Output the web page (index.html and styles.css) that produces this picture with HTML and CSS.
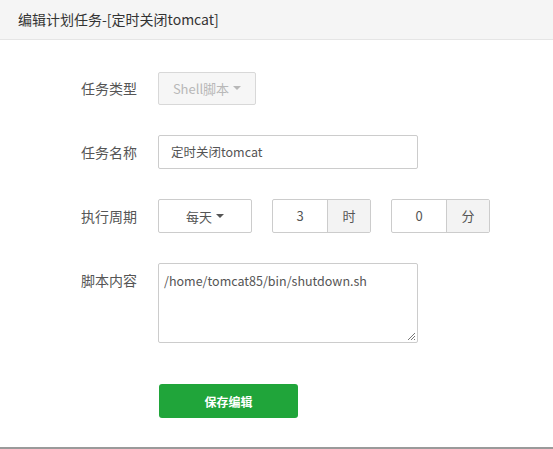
FILE: index.html
```html
<!DOCTYPE html>
<html lang="zh-CN">
<head>
<meta charset="utf-8">
<title>编辑计划任务</title>
<link rel="stylesheet" href="styles.css">
</head>
<body>
<div class="dialog">
  <div class="header">编辑计划任务-[定时关闭tomcat]</div>
  <div class="form">
    <div class="row">
      <span class="label">任务类型</span>
      <div class="select disabled select-type">Shell脚本 <span class="caret"></span></div>
    </div>
    <div class="row">
      <span class="label">任务名称</span>
      <div class="input input-name">定时关闭tomcat</div>
    </div>
    <div class="row">
      <span class="label">执行周期</span>
      <div class="period">
        <div class="select select-cycle">每天 <span class="caret"></span></div>
        <div class="group">
          <div class="group-input">3</div>
          <div class="addon">时</div>
        </div>
        <div class="group">
          <div class="group-input">0</div>
          <div class="addon">分</div>
        </div>
      </div>
    </div>
    <div class="row row-top">
      <span class="label">脚本内容</span>
      <div class="textarea">/home/tomcat85/bin/shutdown.sh
        <svg class="grip" width="9" height="9" viewBox="0 0 9 9"><path d="M8 1 L1 8 M8 4 L4 8 M8 7 L7 8" stroke="#777" stroke-width="1" fill="none"/></svg>
      </div>
    </div>
    <div class="row row-btn">
      <span class="label"></span>
      <button class="btn">保存编辑</button>
    </div>
  </div>
</div>
</body>
</html>
```
FILE: styles.css
```css
html, body {
  margin: 0;
  padding: 0;
  background: #fff;
}
body {
  font-family: "Noto Sans CJK SC", "Open Sans", sans-serif;
  color: #555;
  font-size: 14px;
  height: 449px;
  overflow: hidden;
}
.dialog {
  height: 447px;
  border-bottom: 2px solid #9a9a9a;
  box-sizing: content-box;
}
.header {
  height: 39px;
  line-height: 39px;
  background: #f5f5f5;
  border-bottom: 1px solid #e5e5e5;
  padding-left: 18px;
  font-size: 14px;
  color: #333;
}
.form {
  padding-top: 31px;
}
.row {
  display: flex;
  align-items: center;
  margin-bottom: 30px;
  min-height: 34px;
}
.row-top {
  align-items: flex-start;
}
.row-btn {
  margin-top: 41px;
}
.label {
  width: 137px;
  text-align: right;
  margin-right: 21px;
  line-height: 34px;
  font-size: 14px;
  color: #555;
  flex-shrink: 0;
}
.select, .input, .group, .textarea {
  box-sizing: border-box;
  border: 1px solid #ccc;
  border-radius: 2px;
  font-size: 13px;
  color: #555;
  background: #fff;
}
.select {
  height: 34px;
  display: flex;
  align-items: center;
  justify-content: center;
  gap: 4px;
}
.select.disabled {
  color: #b8b8b8;
  background: #f6f6f6;
  border-color: #d8d8d8;
  height: 33px;
}
.select-type {
  width: 98px;
}
.select-cycle {
  width: 94px;
}
.caret {
  display: inline-block;
  width: 0;
  height: 0;
  border-left: 4px solid transparent;
  border-right: 4px solid transparent;
  border-top: 4px solid currentColor;
}
.select-cycle .caret {
  color: #555;
}
.input {
  height: 34px;
  line-height: 32px;
  padding-left: 12px;
  font-size: 12.5px;
}
.input-name {
  width: 260px;
}
.period {
  display: flex;
  align-items: center;
  gap: 20px;
}
.group {
  display: flex;
  height: 34px;
  width: 99px;
  overflow: hidden;
}
.group-input {
  width: 54px;
  text-align: center;
  line-height: 32px;
}
.addon {
  flex: 1;
  background: #f3f3f3;
  border-left: 1px solid #ccc;
  text-align: center;
  line-height: 32px;
}
.textarea {
  position: relative;
  width: 260px;
  height: 80px;
  padding: 8px 5px;
  font-size: 12.5px;
  line-height: 18px;
  color: #555;
}
.grip {
  position: absolute;
  right: 1px;
  bottom: 1px;
}
.btn {
  margin-left: 1px;
  width: 139px;
  height: 34px;
  background: #20a53a;
  color: #fff;
  border: none;
  border-radius: 3px;
  font-family: inherit;
  font-size: 12px;
  font-weight: bold;
  padding: 0;
}
```
